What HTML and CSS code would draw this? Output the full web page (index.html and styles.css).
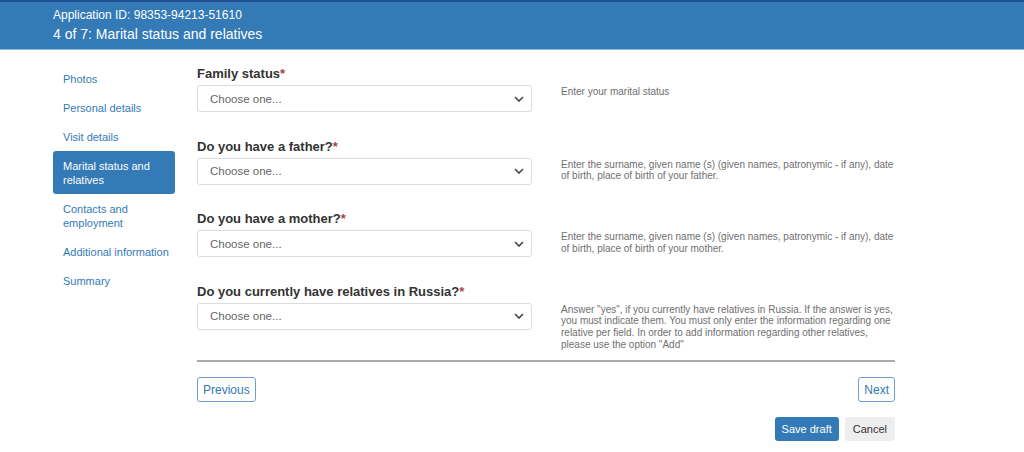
FILE: index.html
```html
<!DOCTYPE html>
<html lang="en">
  <head>
    <meta charset="UTF-8" />
    <meta name="viewport" content="width=device-width, initial-scale=1.0" />
    <title>Application: Marital status and relatives</title>
    <link rel="stylesheet" href="styles.css">
  </head>
  <body>
    <!-- 상단 헤더 -->
    <header class="top">
      <div class="appId">Application ID: 98353-94213-51610</div>
      <h1 class="stepTit">4 of 7: Marital status and relatives</h1>
    </header>

    <div class="wrap">
      <!-- 단계 메뉴 -->
      <nav class="steps">
        <a href="#">Photos</a>
        <a href="#">Personal details</a>
        <a href="#">Visit details</a>
        <a href="#" class="on">Marital status and relatives</a>
        <a href="#">Contacts and employment</a>
        <a href="#">Additional information</a>
        <a href="#">Summary</a>
      </nav>

      <!-- 입력 폼 -->
      <main class="form">
        <div class="field">
          <label class="lbl">Family status<span class="req">*</span></label>
          <div class="sel">
            <span>Choose one...</span>
            <svg width="10" height="6" viewBox="0 0 10 6"><path d="M1 1l4 4 4-4" fill="none" stroke="#444" stroke-width="1.6"/></svg>
          </div>
          <p class="help">Enter your marital status</p>
        </div>

        <div class="field">
          <label class="lbl">Do you have a father?<span class="req">*</span></label>
          <div class="sel">
            <span>Choose one...</span>
            <svg width="10" height="6" viewBox="0 0 10 6"><path d="M1 1l4 4 4-4" fill="none" stroke="#444" stroke-width="1.6"/></svg>
          </div>
          <p class="help">Enter the surname, given name (s) (given names, patronymic - if any), date of birth, place of birth of your father.</p>
        </div>

        <div class="field">
          <label class="lbl">Do you have a mother?<span class="req">*</span></label>
          <div class="sel">
            <span>Choose one...</span>
            <svg width="10" height="6" viewBox="0 0 10 6"><path d="M1 1l4 4 4-4" fill="none" stroke="#444" stroke-width="1.6"/></svg>
          </div>
          <p class="help">Enter the surname, given name (s) (given names, patronymic - if any), date of birth, place of birth of your mother.</p>
        </div>

        <div class="field last">
          <label class="lbl">Do you currently have relatives in Russia?<span class="req">*</span></label>
          <div class="sel">
            <span>Choose one...</span>
            <svg width="10" height="6" viewBox="0 0 10 6"><path d="M1 1l4 4 4-4" fill="none" stroke="#444" stroke-width="1.6"/></svg>
          </div>
          <p class="help">Answer "yes", if you currently have relatives in Russia. If the answer is yes, you must indicate them. You must only enter the information regarding one relative per field. In order to add information regarding other relatives, please use the option "Add"</p>
        </div>

        <hr class="line">

        <!-- 이전/다음 -->
        <div class="pager">
          <button class="btnLine">Previous</button>
          <button class="btnLine">Next</button>
        </div>

        <!-- 저장/취소 -->
        <div class="acts">
          <button class="btnMain">Save draft</button>
          <button class="btnGray">Cancel</button>
        </div>
      </main>
    </div>
  </body>
</html>
```

FILE: styles.css
```css
html,
body {
  margin: 0;
  padding: 0;
}
body {
  font-family: "Liberation Sans", Arial, sans-serif;
  color: #333;
  background-color: #fff;
}

/* 상단 헤더 */
.top {
  background-color: #337ab7;
  border-top: 2px solid #1f4f8e;
  border-bottom: 1px solid #8fb4db;
  padding: 6px 53px 6px;
  color: #fff;
}
.appId {
  font-size: 12px;
  line-height: 14px;
}
.stepTit {
  margin: 4px 0 0;
  font-size: 14px;
  font-weight: normal;
  line-height: 17px;
}

/* 전체 박스 */
.wrap {
  display: flex;
  gap: 22px;
  padding: 14px 53px 0;
}

/* 단계 메뉴 */
.steps {
  display: flex;
  flex-direction: column;
  width: 122px;
  flex-shrink: 0;
}
.steps a {
  display: block;
  padding: 7.5px 2px 7.5px 10px;
  font-size: 11px;
  line-height: 14px;
  color: #337ab7;
  text-decoration: none;
  border-radius: 3px;
}
.steps a.on {
  background-color: #337ab7;
  color: #fff;
  padding-right: 10px;
}

/* 입력 폼 */
.form {
  width: 698px;
  padding-top: 1px;
}
.field {
  display: grid;
  grid-template-columns: 335px 1fr;
  column-gap: 29px;
  margin-bottom: 25.5px;
}
.field.last {
  margin-bottom: 10px;
}
.lbl {
  grid-column: 1 / 3;
  font-size: 13px;
  font-weight: bold;
  line-height: 18px;
  margin-bottom: 2px;
  color: #333;
}
.req {
  color: #a94442;
}
.sel {
  display: flex;
  align-items: center;
  justify-content: space-between;
  box-sizing: border-box;
  height: 27px;
  padding: 0 7px 0 12px;
  border: 1px solid #dcdcdc;
  border-radius: 3px;
  font-size: 11.5px;
  color: #666;
}
.help {
  margin: 0;
  font-size: 10px;
  line-height: 11.7px;
  color: #6f6f6f;
  padding-top: 1px;
}

/* 구분선 */
.line {
  margin: 0;
  border: 0;
  border-top: 2px solid #aaa;
}

/* 이전/다음 버튼 */
.pager {
  display: flex;
  justify-content: space-between;
  margin-top: 15px;
}
.btnLine {
  height: 25px;
  padding: 0 5px;
  font-family: inherit;
  font-size: 12px;
  color: #337ab7;
  background-color: #fff;
  border: 1px solid #6c9fd0;
  border-radius: 3px;
}

/* 저장/취소 */
.acts {
  display: flex;
  justify-content: flex-end;
  gap: 6px;
  margin-top: 15px;
}
.btnMain,
.btnGray {
  height: 24px;
  padding: 0 7px;
  font-family: inherit;
  font-size: 11px;
  border: 0;
  border-radius: 3px;
}
.btnMain {
  background-color: #337ab7;
  color: #fff;
}
.btnGray {
  background-color: #eee;
  color: #333;
  padding: 0 8px;
}
```
